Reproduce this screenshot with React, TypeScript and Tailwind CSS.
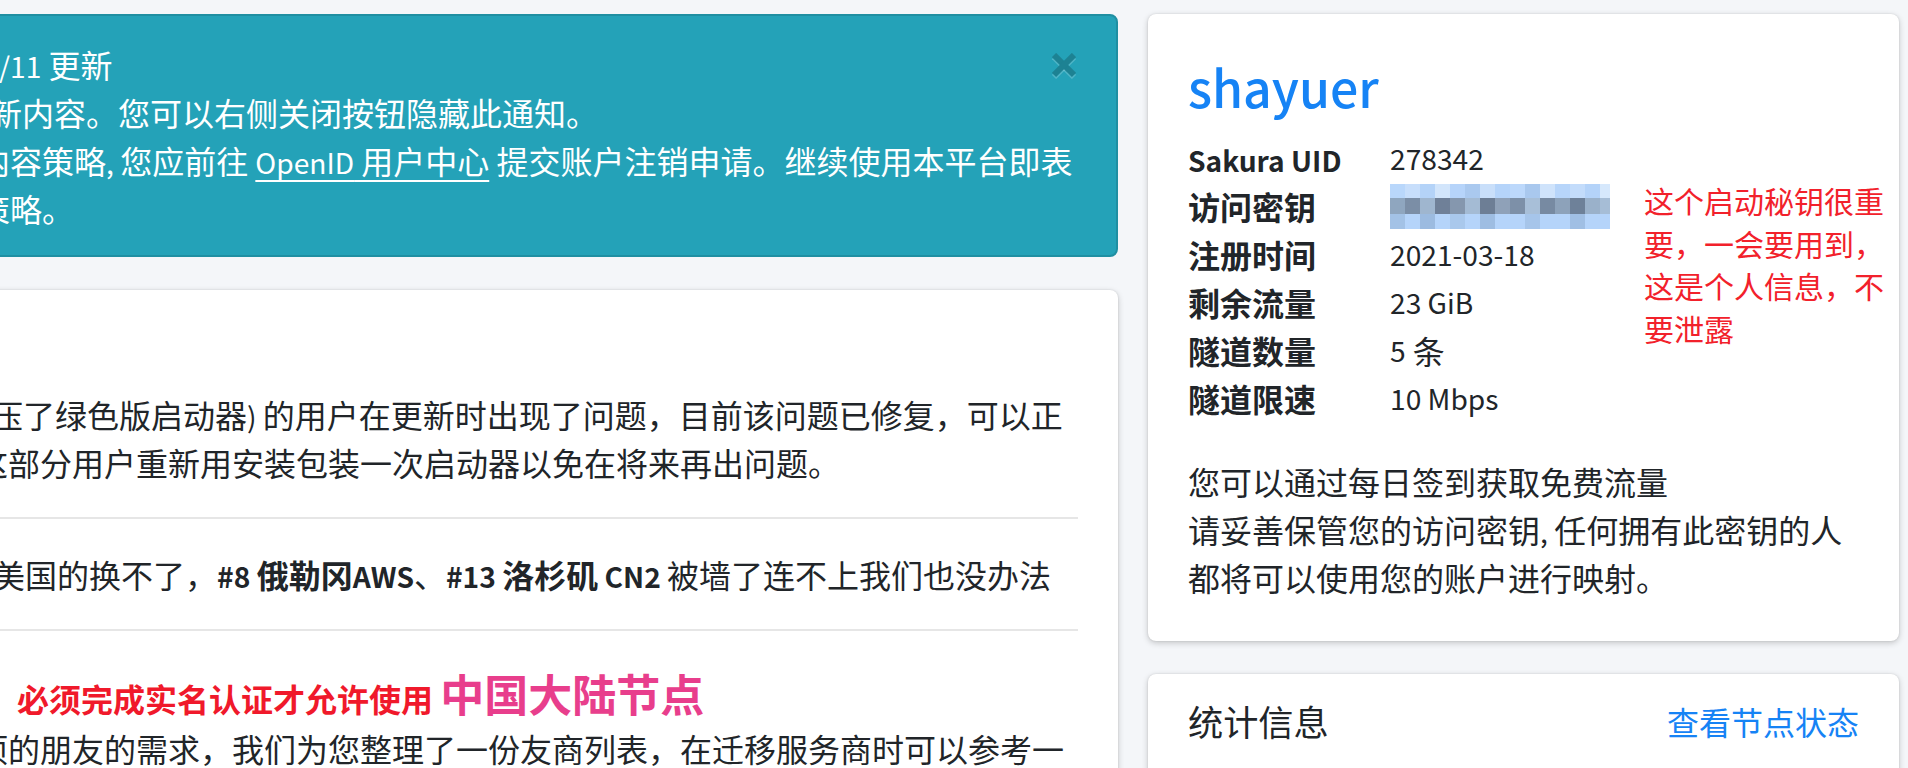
import React from "react";

const mosaicTop = ["#b9d7fb","#c7defb","#b4d3f8","#d2e5fb","#b6d4fa","#aac9ef","#c9dffa","#b5d4fa","#bcd8fb","#a9c8ee","#cfe3fb","#b7d5fa","#c3dcfb","#b4d3f9","#d6e8fc"];
const mosaicMid = ["#8fa6bf","#7b8ea6","#9fb6cf","#6f8098","#8597ae","#a4bbd4","#6d7e95","#8fa1b8","#7d90a8","#a8bfd8","#778aa2","#8da2ba","#6e8199","#9ab1ca","#a6bdd6"];
const mosaicBot = ["#a3c2e6","#b5d4fa","#9cbbe0","#b5d4fa","#a9c8ec","#b5d4fa","#9ebde2","#b5d4fa","#b5d4fa","#a6c5ea","#b5d4fa","#b5d4fa","#a0bfe4","#b5d4fa","#b5d4fa"];

function Mosaic() {
  return (
    <svg width="220" height="45" viewBox="0 0 220 45" className="block">
      <rect x="0" y="0" width="220" height="45" fill="#b5d4fa" />
      {mosaicTop.map((c, i) => (
        <rect key={"t" + i} x={i * 15} y={0} width={15} height={14} fill={c} />
      ))}
      {mosaicMid.map((c, i) => (
        <rect key={"m" + i} x={i * 15} y={14} width={15} height={16} fill={c} />
      ))}
      {mosaicBot.map((c, i) => (
        <rect key={"b" + i} x={i * 15} y={30} width={15} height={15} fill={c} />
      ))}
    </svg>
  );
}

/* Latin runs: the reference uses a narrower Latin face, so set them slightly smaller */
function L({ children }: { children: React.ReactNode }) {
  return <span className="text-[0.88em] leading-none">{children}</span>;
}

function Row({ label, children }: { label: React.ReactNode; children: React.ReactNode }) {
  return (
    <div className="flex h-[48px] items-center leading-[48px]">
      <div className="w-[202px] shrink-0 font-bold">{label}</div>
      <div className="flex items-center">{children}</div>
    </div>
  );
}

export default function App() {
  return (
    <div className="w-[1908px] h-[768px] overflow-hidden bg-[#f4f6f9] text-[#212529] font-['Noto_Sans_CJK_SC',sans-serif] text-[32px]">
      <div className="flex items-start gap-[30px] pt-[14px]">
        {/* Left column */}
        <div className="ml-[-60px] w-[1178px] shrink-0 flex flex-col gap-[33px]">
          {/* Alert */}
          <div className="relative rounded-[8px] border-2 border-[#1f8fa2] bg-[#24a2b8] text-white pl-[40px] pr-[40px] pt-[24px] pb-[23px] leading-[48px]">
            <div className="h-[48px] whitespace-nowrap ml-[17px]"><L>/11</L> 更新</div>
            <div className="h-[48px] whitespace-nowrap ml-[8px]">新内容。您可以右侧关闭按钮隐藏此通知。</div>
            <div className="h-[48px] whitespace-nowrap ml-[-4px]">
              内容策略<L>, </L>您应前往 <span className="underline decoration-2 underline-offset-[6px]"><L>OpenID</L> 用户中心</span> 提交账户注销申请。继续使用本平台即表
            </div>
            <div className="h-[48px] whitespace-nowrap ml-[-4px]">策略。</div>
            <svg className="absolute right-[40px] top-[37px]" width="24" height="26" viewBox="0 0 24 26">
              <g stroke="#ffffff" strokeOpacity="0.2" strokeWidth="6">
                <line x1="2" y1="4" x2="22" y2="24" />
                <line x1="22" y1="4" x2="2" y2="24" />
              </g>
              <g stroke="#1d8293" strokeWidth="6">
                <line x1="2" y1="2" x2="22" y2="22" />
                <line x1="22" y1="2" x2="2" y2="22" />
              </g>
            </svg>
          </div>

          {/* Announcement card */}
          <div className="h-[600px] rounded-[8px] bg-white shadow-[0_0_2px_rgba(0,0,0,0.125),0_2px_6px_rgba(0,0,0,0.2)] pl-[40px] pr-[40px] pt-[100px]">
            <div className="h-[48px] leading-[48px] whitespace-nowrap ml-[11px]">
              压了绿色版启动器<L>) </L>的用户在更新时出现了问题，目前该问题已修复，可以正
            </div>
            <div className="h-[48px] leading-[48px] whitespace-nowrap ml-[-4px]">
              这部分用户重新用安装包装一次启动器以免在将来再出问题。
            </div>
            <div className="mt-[31px] mb-[31px] h-[2px] bg-[#e6e6e6]" />
            <div className="h-[48px] leading-[48px] whitespace-nowrap ml-[13px]">
              美国的换不了，<b><L>#8 </L>俄勒冈<L>AWS</L></b>、<b><L>#13 </L>洛杉矶<L> CN2</L></b><L> </L>被墙了连不上我们也没办法
            </div>
            <div className="mt-[31px] mb-[31px] h-[2px] bg-[#e6e6e6]" />
            <div className="h-[62px] leading-[62px] whitespace-nowrap ml-[37px]">
              <span className="font-bold text-[#f0192b]">必须完成实名认证才允许使用</span>{" "}
              <span className="font-bold text-[44px] text-[#e83e8c]">中国大陆节点</span>
            </div>
            <div className="h-[48px] leading-[48px] whitespace-nowrap ml-[-4px]">
              项的朋友的需求，我们为您整理了一份友商列表，在迁移服务商时可以参考一
            </div>
          </div>
        </div>

        {/* Right column */}
        <div className="w-[751px] shrink-0 flex flex-col gap-[33px]">
          <div className="relative rounded-[8px] bg-white shadow-[0_0_2px_rgba(0,0,0,0.125),0_2px_6px_rgba(0,0,0,0.2)] px-[40px] pt-[40px] pb-[40px]">
            <h3 className="h-[64px] text-[50px] leading-[64px] font-medium text-[#1683f5] mb-[16px]">shayuer</h3>
            <div className="mb-[35px]">
              <Row label={<L>Sakura UID</L>}><L>278342</L></Row>
              <Row label="访问密钥"><Mosaic /></Row>
              <Row label="注册时间"><L>2021-03-18</L></Row>
              <Row label="剩余流量"><L>23 GiB</L></Row>
              <Row label="隧道数量"><L>5</L>&nbsp;条</Row>
              <Row label="隧道限速"><L>10 Mbps</L></Row>
            </div>
            <p className="leading-[48px]">
              您可以通过每日签到获取免费流量<br />
              请妥善保管您的访问密钥<L>, </L>任何拥有此密钥的人<br />
              都将可以使用您的账户进行映射。
            </p>
            <div className="absolute left-[496px] top-[165px] text-[30px] leading-[42.5px] text-[#f2212b] whitespace-nowrap">
              这个启动秘钥很重<br />
              要，一会要用到，<br />
              这是个人信息，不<br />
              要泄露
            </div>
          </div>

          <div className="h-[200px] rounded-[8px] bg-white shadow-[0_0_2px_rgba(0,0,0,0.125),0_2px_6px_rgba(0,0,0,0.2)]">
            <div className="flex items-center justify-between px-[40px] pt-[20px] pb-[24px]">
              <div className="text-[35.2px] leading-[53px]">统计信息</div>
              <div className="text-[32px] leading-[48px] text-[#1683f5]">查看节点状态</div>
            </div>
          </div>
        </div>
      </div>
    </div>
  );
}
